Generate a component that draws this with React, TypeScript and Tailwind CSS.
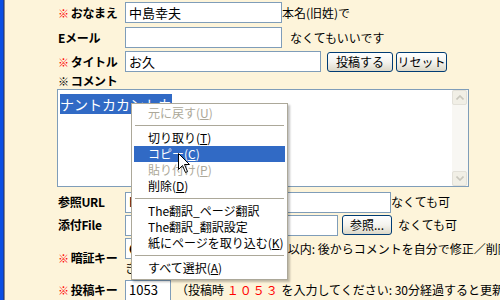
const jp = "font-['Noto_Sans_CJK_JP',sans-serif]";

const Req = () => <span className="mr-[2px] text-[11px] text-[#ff0000]">※</span>;

const Label = ({ children, req }: { children: React.ReactNode; req?: boolean }) => (
  <div className="flex w-[68px] shrink-0 items-center whitespace-nowrap pl-[1px] text-[12px] font-bold leading-[16px] tracking-[-0.3px] text-black">
    {req && <Req />}
    {children}
  </div>
);

const Input = ({ w, value }: { w: string; value?: string }) => (
  <div
    className={`${w} flex h-[21px] shrink-0 items-center overflow-hidden whitespace-nowrap border border-[#7f9db9] bg-white pl-[3px] text-[13px] leading-[16px]`}
  >
    {value}
  </div>
);

const XpButton = ({ w, children }: { w: string; children: React.ReactNode }) => (
  <div
    className={`${w} flex h-[20px] shrink-0 items-center justify-center rounded-[3px] border border-[#003c74] bg-gradient-to-b from-white via-[#f4f3ee] to-[#dcd8c8] text-[12px] leading-[14px]`}
  >
    {children}
  </div>
);

type MenuItem = { text: string; key?: string; disabled?: boolean; active?: boolean } | 'sep';

const menu: MenuItem[] = [
  { text: '元に戻す', key: 'U', disabled: true },
  'sep',
  { text: '切り取り', key: 'T' },
  { text: 'コピー', key: 'C', active: true },
  { text: '貼り付け', key: 'P', disabled: true },
  { text: '削除', key: 'D' },
  'sep',
  { text: 'The翻訳_ページ翻訳' },
  { text: 'The翻訳_翻訳設定' },
  { text: '紙にページを取り込む', key: 'K' },
  'sep',
  { text: 'すべて選択', key: 'A' },
];

const ContextMenu = () => (
  <div className="absolute left-[131px] top-[103px] flex h-[177px] w-[157px] flex-col border border-[#aca899] bg-white p-[2px] pt-[1px] text-[12px] leading-[16px] shadow-[2px_2px_2px_rgba(0,0,0,0.25)]">
    {menu.map((m, i) =>
      m === 'sep' ? (
        <div key={i} className="flex h-[9px] items-center px-[1px]">
          <div className="h-[1px] w-full bg-[#aca899]" />
        </div>
      ) : (
        <div
          key={i}
          className={`flex h-[16px] items-center whitespace-nowrap pl-[14px] ${
            m.active ? 'bg-[#316ac5] text-white' : m.disabled ? 'text-[#aca899]' : 'text-black'
          }`}
        >
          {m.text}
          {m.key && (
            <span>
              (<u>{m.key}</u>)
            </span>
          )}
        </div>
      )
    )}
  </div>
);

const Cursor = () => (
  <svg className="absolute left-[178px] top-[153px]" width="13" height="21" viewBox="0 0 13 21">
    <path d="M0.5 0.5 L0.5 16.5 L4.5 12.5 L7.5 19.5 L9.5 18.5 L6.5 11.5 L11.5 11.5 Z" fill="white" stroke="black" />
  </svg>
);

const ScrollArrow = ({ up }: { up?: boolean }) => (
  <div className="flex h-[15px] w-[15px] items-center justify-center rounded-[2px] border border-[#e3e1d9] bg-[#f1efe6]">
    <svg width="8" height="5" viewBox="0 0 8 5">
      <path d={up ? 'M0.5 4.5 L4 1 L7.5 4.5' : 'M0.5 0.5 L4 4 L7.5 0.5'} fill="none" stroke="#c9c7bd" strokeWidth="1.6" />
    </svg>
  </div>
);

export default function App() {
  return (
    <div className={`${jp} relative flex h-[300px] w-[500px] overflow-hidden bg-[#fdf4da] text-black`}>
      <div className="w-[3px] shrink-0 bg-[#0a4ee4]" />
      <div className="w-[1px] shrink-0 bg-[#1a3d9c]" />
      <div className="w-[1px] shrink-0 bg-[#8a8a8a]" />

      <div className="flex flex-col pl-[52px] pt-[2px]">
        <div className="flex h-[21px] items-center">
          <Label req>おなまえ</Label>
          <Input w="w-[157px]" value="中島幸夫" />
          <span className="whitespace-nowrap text-[12px]">本名(旧姓)で</span>
        </div>

        <div className="mt-[4px] flex h-[21px] items-center">
          <Label>Eメール</Label>
          <Input w="w-[157px]" />
          <span className="ml-[8px] whitespace-nowrap text-[12px]">なくてもいいです</span>
        </div>

        <div className="mt-[3px] flex h-[21px] items-center">
          <Label req>タイトル</Label>
          <Input w="w-[196px]" value="お久" />
          <div className="ml-[6px] flex gap-[3px]">
            <XpButton w="w-[66px]">投稿する</XpButton>
            <XpButton w="w-[51px]">リセット</XpButton>
          </div>
        </div>

        <div className="mt-[1px] flex h-[17px] items-center">
          <Label>
            <span className="mr-[2px] text-[11px]">※</span>コメント
          </Label>
        </div>

        <div className="flex h-[101px] w-[412px] border border-[#7f9db9] bg-white">
          <div className="flex-1 pl-[2px] pt-[1px]">
            <span className="bg-[#316ac5] text-[14px] leading-[14px] text-white">ナントカカントカ</span>
          </div>
          <div className="flex w-[16px] flex-col justify-between bg-[#f8f7f3]">
            <ScrollArrow up />
            <ScrollArrow />
          </div>
        </div>

        <div className="mt-[5px] flex h-[20px] items-center">
          <Label>参照URL</Label>
          <Input w="w-[266px]" value="http://" />
          <span className="whitespace-nowrap text-[12px]">なくても可</span>
        </div>

        <div className="mt-[3px] flex h-[20px] items-center">
          <Label>添付File</Label>
          <Input w="w-[213px]" />
          <div className="ml-[4px]">
            <XpButton w="w-[50px]">参照...</XpButton>
          </div>
          <span className="ml-[6px] whitespace-nowrap text-[12px]">なくても可</span>
        </div>

        <div className="mt-[3px] flex h-[39px] items-center">
          <Label req>暗証キー</Label>
          <div className="flex flex-col">
            <div className="flex h-[21px] items-center">
              <Input w="w-[140px]" value="●●●●" />
              <span className="ml-[4px] whitespace-nowrap text-[12px]">8字以内: 後からコメントを自分で修正／削除</span>
            </div>
            <span className="whitespace-nowrap text-[12px] leading-[18px]">きます</span>
          </div>
        </div>

        <div className="mt-[3px] flex h-[20px] items-center">
          <Label req>投稿キー</Label>
          <Input w="w-[46px]" value="1053" />
          <span className="ml-[5px] whitespace-nowrap text-[12px]">
            （投稿時 <span className="tracking-[1px] text-[#ff0000]">１０５３</span> を入力してください: 30分経過すると更新され
          </span>
        </div>
      </div>

      <ContextMenu />
      <Cursor />
    </div>
  );
}
